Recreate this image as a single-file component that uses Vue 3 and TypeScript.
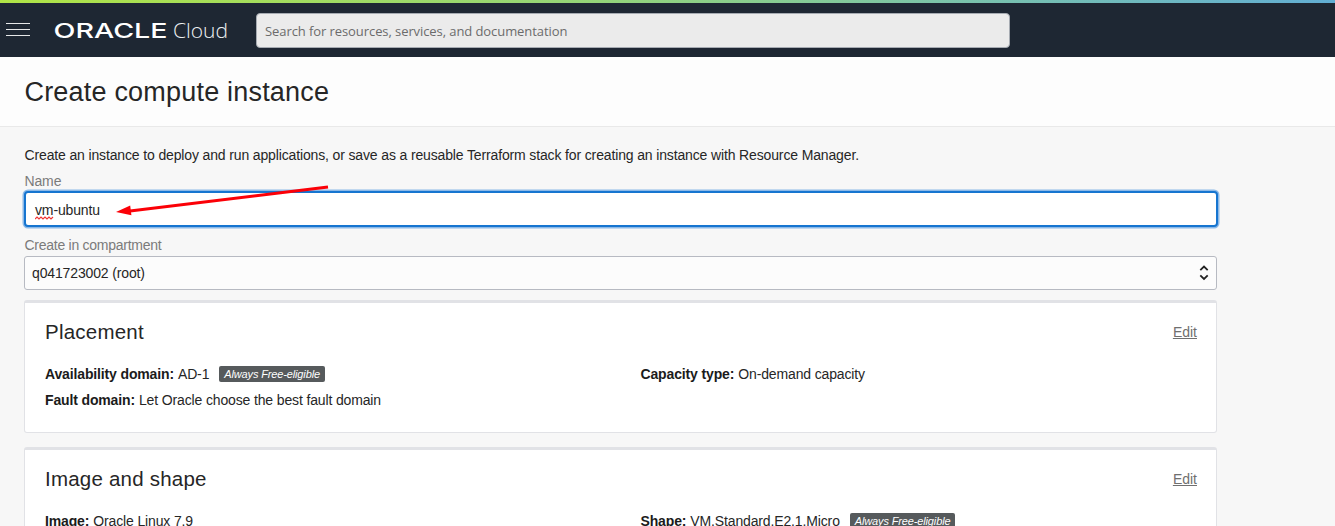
<script setup lang="ts">
import { ref } from 'vue'

interface Field {
  label: string
  value: string
  free?: boolean
}
interface Section {
  title: string
  columns: Field[][]
}

const name = ref('vm-ubuntu')
const sections: Section[] = [
  {
    title: 'Placement',
    columns: [
      [
        { label: 'Availability domain:', value: 'AD-1', free: true },
        { label: 'Fault domain:', value: 'Let Oracle choose the best fault domain' },
      ],
      [{ label: 'Capacity type:', value: 'On-demand capacity' }],
    ],
  },
  {
    title: 'Image and shape',
    columns: [
      [{ label: 'Image:', value: 'Oracle Linux 7.9' }],
      [{ label: 'Shape:', value: 'VM.Standard.E2.1.Micro', free: true }],
    ],
  },
]
</script>

<template>
  <div class="page">
    <header class="topbar">
      <button class="menu" aria-label="Menu"><i></i><i></i><i></i></button>
      <svg class="logo" width="180" height="30" viewBox="0 0 180 30">
        <text class="brand" x="2.5" y="22.5" textLength="114" lengthAdjust="spacingAndGlyphs">ORACLE</text>
        <text class="product" x="122" y="22.7" textLength="55" lengthAdjust="spacingAndGlyphs">Cloud</text>
      </svg>
      <div class="search">Search for resources, services, and documentation</div>
    </header>

    <div class="titlebar">
      <h1><svg width="320" height="40"><text x="-0.5" y="30" textLength="304.5">Create compute instance</text></svg></h1>
    </div>

    <main class="content">
      <p class="intro">Create an instance to deploy and run applications, or save as a reusable Terraform stack for creating an instance with Resource Manager.</p>
      <div class="label">Name</div>
      <div class="name-field">
        <span class="misspelt">{{ name.slice(0, 2) }}<svg width="20" height="4" viewBox="0 0 20 4"><path d="M0 3 L2 1 L4 3 L6 1 L8 3 L10 1 L12 3 L14 1 L16 3 L18 1" /></svg></span>{{ name.slice(2) }}
        <svg class="arrow" width="220" height="36" viewBox="0 0 220 36">
          <path d="M14 27 L212 3" />
          <polygon points="0,28 14.2,21.6 15.4,31.2" />
        </svg>
      </div>
      <div class="label second">Create in compartment</div>
      <div class="select">
        <span>q041723002 (root)</span>
        <svg width="10" height="16" viewBox="0 0 10 16">
          <path d="M1.3 5.2 L5 1.6 L8.7 5.2 M1.3 10.4 L5 14 L8.7 10.4" />
        </svg>
      </div>

      <section v-for="section in sections" :key="section.title" class="card">
        <div class="card-head">
          <h2>{{ section.title }}</h2>
          <a>Edit</a>
        </div>
        <div class="columns">
          <div v-for="(column, i) in section.columns" :key="i">
            <div v-for="field in column" :key="field.label" class="field">
              <b>{{ field.label }}</b><span class="value">{{ field.value }}</span>
              <span v-if="field.free" class="badge">Always Free-eligible</span>
            </div>
          </div>
        </div>
      </section>
    </main>
  </div>
</template>

<style>
html,
body {
  overflow: hidden;
}
</style>

<style scoped>
* {
  box-sizing: border-box;
}
.page {
  width: 100%;
  height: 526px;
  overflow: hidden;
  background: #f7f7f7;
  color: #262626;
  font: 14px/20px "Liberation Sans", Arial, sans-serif;
  letter-spacing: -0.14px;
}
.topbar {
  position: relative;
  display: flex;
  align-items: flex-start;
  height: 57px;
  background: #1e2733;
  letter-spacing: 0;
}
.topbar::before {
  content: "";
  position: absolute;
  inset: 0 0 auto;
  height: 2.5px;
  background: linear-gradient(90deg, #b0e447, #94d479 45%, #7cc4a8 70%, #62aed4);
}
.menu {
  display: flex;
  flex-direction: column;
  gap: 5px;
  width: 24px;
  margin: 23px 0 0 6px;
  padding: 0;
  border: 0;
  background: none;
}
.menu i {
  width: 24px;
  height: 1px;
  background: #e6e8e9;
}
.logo {
  margin: 15px 0 0 21px;
  fill: #fff;
}
.brand {
  font: 500 20.5px Inter, sans-serif;
}
.product {
  font: 300 20.5px "Open Sans", Inter, sans-serif;
  fill: #edf0f2;
}
.search {
  width: 754px;
  height: 35px;
  margin: 13px 0 0 25px;
  padding: 0 8px;
  border: 1px solid #a6abb2;
  border-radius: 4px;
  background: #ebebeb;
  color: #6b6b6b;
  font: 13px/34px "Open Sans", "Noto Sans", sans-serif;
  letter-spacing: -0.08px;
}
.titlebar {
  height: 70px;
  padding: 14px 25px;
  border-bottom: 1px solid #e9e9e9;
  background: #fdfdfd;
}
h1 {
  margin: 0;
  font-size: 27px;
  font-weight: 400;
  letter-spacing: 0;
}
h1 svg {
  display: block;
  overflow: visible;
  fill: #262626;
}
.content {
  width: 1217px;
  padding: 18px 0 0 24px;
}
.intro {
  margin: 0 0 6px 0.5px;
  white-space: nowrap;
}
.label {
  margin-left: 0.5px;
  color: #7b7b7b;
}
.label.second {
  margin-top: 8px;
  letter-spacing: -0.26px;
}
.name-field {
  position: relative;
  height: 36px;
  margin-right: -1px;
  padding-left: 9px;
  border: 2px solid #1675d0;
  border-radius: 4px;
  box-shadow: 0 0 0 1.5px #8cb9e8;
  background: #fff;
  line-height: 34px;
}
.misspelt {
  position: relative;
}
.misspelt svg {
  position: absolute;
  left: 0;
  bottom: -2px;
}
.misspelt path {
  fill: none;
  stroke: #ef3434;
  stroke-width: 1.2;
}
.arrow {
  position: absolute;
  left: 90px;
  top: -9px;
}
.arrow path {
  stroke: #fb0007;
  stroke-width: 3;
}
.arrow polygon {
  fill: #fb0007;
}
.select {
  display: flex;
  align-items: center;
  justify-content: space-between;
  height: 34px;
  margin-top: 1px;
  padding: 0 7px;
  border: 1px solid #b7bac2;
  border-radius: 3px;
  background: #fcfcfc;
}
.select path {
  fill: none;
  stroke: #222;
  stroke-width: 1.8;
}
.card {
  height: 133px;
  margin: 10px 0 14px;
  padding: 15px 19px 0 20px;
  border: 1px solid #e1e2e6;
  border-top-width: 3px;
  border-radius: 3px;
  background: #fff;
}
.card-head {
  display: flex;
  align-items: center;
  justify-content: space-between;
  height: 28px;
}
h2 {
  margin: 0;
  font-size: 20.5px;
  font-weight: 400;
  letter-spacing: 0.22px;
}
.card-head a {
  color: #6f6f6f;
  letter-spacing: 0;
  text-decoration: underline;
}
.columns {
  display: grid;
  grid-template-columns: 595.5px 1fr;
  padding-top: 18px;
}
.field {
  display: flex;
  align-items: center;
  height: 20px;
  margin-bottom: 6px;
  white-space: nowrap;
}
.field b {
  color: #1b1b1b;
}
.value {
  margin-left: 4px;
}
.badge {
  height: 16px;
  margin-left: 10px;
  padding: 0 5px;
  border-radius: 2px;
  background: #565a5c;
  color: #fff;
  font-size: 11px;
  font-style: italic;
  line-height: 17px;
}
</style>
